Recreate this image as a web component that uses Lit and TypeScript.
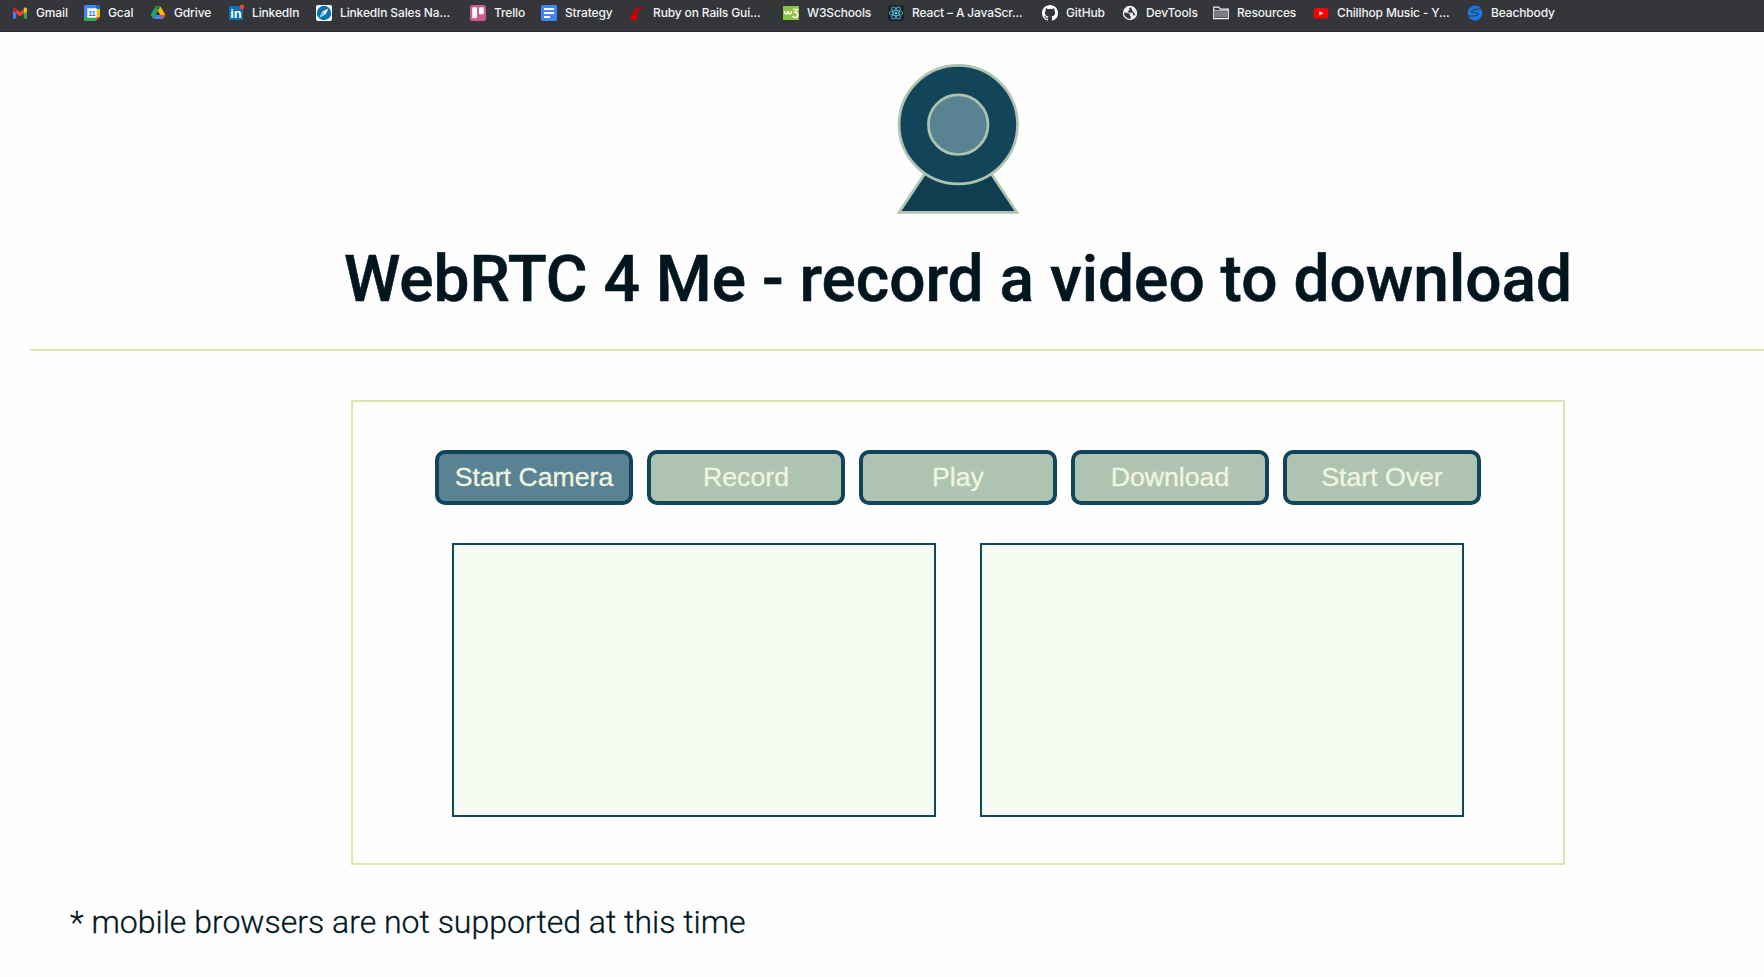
import { LitElement, html, css, svg } from "lit";
import { customElement, property } from "lit/decorators.js";

const icons = {
  gmail: svg`<path d="M1 3.6v10h3.2V7.200z" fill="#4285f4"/><path d="M15 3.600v10h-3.200V7.200z" fill="#34a853"/><path d="M4.200 4.200v4.200L8 11.200l3.800-2.800V4.200L8 7z" fill="#ea4335"/><path d="M1 4.400C1 2.600 2.900 2 4.200 3v5.400L1 6z" fill="#c5221f"/><path d="M15 4.400C15 2.600 13.100 2 11.800 3v5.400L15 6z" fill="#fbbc04"/>`,
  gcal: svg`<path d="M0 1.500Q0 0 1.500 0H12v4H4v8H0z" fill="#4285f4"/><path d="M12 0h2.500Q16 0 16 1.500V4h-4z" fill="#1967d2"/><path d="M12 4h4v8h-4z" fill="#fbbc04"/><path d="M0 12h12v4H1.500Q0 16 0 14.500z" fill="#34a853"/><path d="M12 12h4l-4 4z" fill="#ea4335"/><path d="M3.300 3.300h9.400v9.400H3.300z" fill="#fff"/><text x="7.800" y="10.800" font-size="7.500" font-weight="700" letter-spacing="-.3" text-anchor="middle" fill="#1a73e8" font-family="Liberation Sans">11</text>`,
  drive: svg`<path d="M5.500 1.500L8 5.700 3.300 14 .700 9.800z" fill="#1ea362"/><path d="M5.500 1.500h5l4.900 8.500h-5z" fill="#ffba00"/><path d="M5.500 1.500h5L8 5.700z" fill="#188038"/><path d="M5.600 10h9.800l-2.400 4H3.300z" fill="#4285f4"/><path d="M10.400 10h5L13 14z" fill="#ea4335"/>`,
  linkedin: svg`<path d="M1 1h14v14H1z" fill="#0a72b1"/><text x="8" y="13" font-size="13" font-weight="700" text-anchor="middle" fill="#fff" font-family="Liberation Sans">in</text><circle cx="14" cy="1.800" r="2.400" fill="#ea4335"/>`,
  sales: svg`<rect width="16" height="16" rx="2" fill="#fff"/><circle cx="8" cy="8" r="7.200" fill="#0a72b1"/><path d="M12.500 3.500L9.500 9.500 3.500 12.500 6.500 6.500z" fill="#fff"/><path d="M6.500 6.500l3 3-6 3z" fill="#8bc3e6"/>`,
  trello: svg`<rect width="16" height="16" rx="2.500" fill="#cd5a91"/><rect x="2.200" y="2.200" width="4.800" height="11" rx="1" fill="#fff"/><rect x="9" y="2.200" width="4.800" height="7" rx="1" fill="#fff"/>`,
  doc: svg`<rect width="16" height="16" rx="2" fill="#4285f4"/><path d="M3 4h10M3 8h10M3 12h6" stroke="#fff" stroke-width="1.800"/>`,
  rails: svg`<path d="M1 15C.800 12 3 10.500 4 8.500 5.200 5.300 8 2.500 13 2.200L14 3.500 11 4C8.700 5.500 8 7.500 8 9.500 8 11.500 8.300 13.500 9 15z" fill="#d30001"/><path d="M1 10.600l1.800 1.100M2.500 7l1.700 1.300M5 3.600l1.500 1.800M9 1.300l.500 1.700M14 1.200l.800.800" stroke="#d30001" stroke-width="1"/>`,
  w3: svg`<rect y="1" width="16" height="14" rx=".500" fill="#8bc53f"/><path d="M1.500 5.800c0 4 3.300 4 3.500.300.200 3.700 3.600 3.500 3.600-.300M10.300 4.400h4.200l-2.600 2.900c3.800 0 3.500 5.200 0 5.200-1.200 0-1.900-.500-2.300-1.400" fill="none" stroke="#fff" stroke-width="1.400"/>`,
  react: svg`<rect width="16" height="16" rx="2.500" fill="#20232a"/><g fill="none" stroke="#4fb4cf" stroke-width=".900"><ellipse cx="8" cy="8" rx="6.800" ry="2.600"/><ellipse cx="8" cy="8" rx="6.800" ry="2.600" transform="rotate(60 8 8)"/><ellipse cx="8" cy="8" rx="6.800" ry="2.600" transform="rotate(120 8 8)"/></g><circle cx="8" cy="8" r="1.300" fill="#61dafb"/>`,
  github: svg`<path fill="#fff" d="M8 0C3.580 0 0 3.580 0 8c0 3.540 2.290 6.530 5.470 7.590.4.070.55-.17.55-.38 0-.19-.01-.82-.01-1.490-2.010.37-2.530-.49-2.690-.94-.09-.23-.48-.94-.82-1.130-.28-.15-.68-.52-.01-.53.63-.01 1.080.58 1.230.82.72 1.210 1.870.87 2.330.66.07-.52.28-.87.51-1.070-1.780-.2-3.640-.89-3.640-3.950 0-.87.31-1.590.82-2.150-.08-.2-.36-1.020.08-2.120 0 0 .67-.21 2.200.82a7.600 7.600 0 0 1 4 0c1.530-1.040 2.200-.82 2.200-.82.44 1.100.16 1.920.08 2.120.51.56.82 1.270.82 2.150 0 3.070-1.870 3.750-3.650 3.950.29.25.54.73.54 1.480 0 1.070-.01 1.930-.01 2.200 0 .21.15.46.55.38A8 8 0 0 0 16 8c0-4.420-3.580-8-8-8z"/>`,
  globe: svg`<circle cx="8" cy="8" r="7.200" fill="#f1f3f4"/><path d="M2.300 7.800l3.700.400 2 1-.500 1.800 1.300.700-.500 2.100C5 13.600 2.300 11.500 2.300 7.800zM8.800 2.400L7 3.600l1 1.500-2 1.200.5 1 4.200.4.8 2.600 1.900-.3" fill="#35363a" stroke="#35363a" stroke-width=".4"/><path d="M9.200 3.400l2.500.6-1.700 1.800 1.800 1.200 2.200.4-1-2.500z" fill="#f1f3f4"/>`,
  folder: svg`<path d="M.750 13.700V2.200h5l1.500 2h8v9.500z" fill="#35363a" stroke="#f1f3f4" stroke-width="1.200"/><path d="M2 6.500h12v6H2z" fill="#7c7d80"/><path d="M1 5.700h14" stroke="#f1f3f4" stroke-width=".800"/>`,
  youtube: svg`<rect x=".800" y="3" width="14.400" height="10.500" rx="2.500" fill="#f00"/><path d="M6.300 6l4 2.200-4 2.200z" fill="#fff"/>`,
  beach: svg`<circle cx="8" cy="8" r="7.400" fill="#1579e6"/><path d="M14.500 3.800C9 4 5.500 4.800 3.800 6.600c2.200 1.200 6 .600 8.200 2-1.500 2-6.500 3.200-11.500 2.200" fill="none" stroke="#35363a" stroke-width="1"/>`,
};

const bookmarks: [keyof typeof icons, string][] = [
  ["gmail", "Gmail"],
  ["gcal", "Gcal"],
  ["drive", "Gdrive"],
  ["linkedin", "LinkedIn"],
  ["sales", "LinkedIn Sales Na..."],
  ["trello", "Trello"],
  ["doc", "Strategy"],
  ["rails", "Ruby on Rails Gui..."],
  ["w3", "W3Schools"],
  ["react", "React – A JavaScr..."],
  ["github", "GitHub"],
  ["globe", "DevTools"],
  ["folder", "Resources"],
  ["youtube", "Chillhop Music - Y..."],
  ["beach", "Beachbody"],
];

@customElement("bookmarks-bar")
class BookmarksBar extends LitElement {
  static styles = css`
    :host {
      display: grid;
      box-sizing: border-box;
      height: 32px;
      padding: 5px 0 0 12px;
      grid-template-columns: 72px 66px 78px 88px 154px 71px 88px 154px 105px 154px 80px 91px 100px 154px 100px;
      align-items: start;
      background: #35363a;
      border-bottom: 1px solid #28292c;
      font: 500 12px/16px Inter, sans-serif;
      letter-spacing: -0.14px;
      color: #f1f3f4;
    }
    .item {
      display: flex;
      gap: 8px;
      white-space: nowrap;
    }
    .icon {
      width: 16px;
      height: 16px;
      flex: none;
      overflow: visible;
    }
  `;
  render() {
    return bookmarks.map(
      ([icon, label]) => html`<div class="item">
        <svg class="icon" viewBox="0 0 16 16">${icons[icon]}</svg><span>${label}</span>
      </div>`
    );
  }
}

@customElement("control-button")
class ControlButton extends LitElement {
  @property() label = "";
  @property({ type: Boolean }) disabled = false;
  static styles = css`
    .btn {
      display: block;
      width: 198px;
      height: 55px;
      padding: 0;
      border: 4px solid #124559;
      border-radius: 10px;
      background: #598392;
      color: #eff6e0;
      font: 26.67px "Liberation Sans", Arial, sans-serif;
      -webkit-text-stroke: 0.3px #eff6e0;
      white-space: nowrap;
    }
    .btn:disabled {
      background: #aec3b0;
    }
  `;
  render() {
    return html`<button class="btn" ?disabled=${this.disabled}>${this.label}</button>`;
  }
}

@customElement("app-root")
class AppRoot extends LitElement {
  static styles = css`
    :host {
      display: block;
      height: 977px;
      overflow: hidden;
      background: #fefefe;
      color: #01161e;
      font-family: Roboto, sans-serif;
    }
    .page {
      display: flex;
      flex-direction: column;
      align-items: center;
      width: 1856px;
      padding: 30px 30px 0;
    }
    .logo {
      display: block;
      width: 126px;
      height: 154px;
    }
    h1 {
      margin: 26px 0 0;
      font-size: 64px;
      line-height: 76px;
      font-weight: 500;
      -webkit-text-stroke: 0.6px #01161e;
      white-space: nowrap;
    }
    .rule {
      align-self: stretch;
      height: 2px;
      margin-top: 31px;
      background: #d8e8ac;
    }
    .panel {
      box-sizing: border-box;
      width: 1214px;
      height: 465px;
      margin-top: 49px;
      padding-top: 48px;
      border: 2px solid #d8e8ac;
      display: flex;
      flex-direction: column;
      align-items: center;
      gap: 38px;
    }
    .controls {
      display: flex;
      gap: 14px;
    }
    .screens {
      display: flex;
      gap: 44px;
    }
    .screen {
      box-sizing: border-box;
      width: 484px;
      height: 274px;
      border: 2px solid #124559;
      background: #f6fcf1;
    }
    .note {
      align-self: flex-start;
      margin: 37px 0 0 40px;
      font-size: 32px;
      line-height: 40px;
      font-weight: 300;
      -webkit-text-stroke: 0.3px #01161e;
      white-space: nowrap;
    }
  `;
  render() {
    return html`
      <bookmarks-bar></bookmarks-bar>
      <main class="page">
        <svg class="logo" viewBox="0 0 126 154" stroke="#aec3b0" stroke-width="2.7">
          <path d="M4.200 150.300L63 61.500l58.800 88.800z" fill="#103d50" />
          <circle cx="63.300" cy="62.600" r="59.200" fill="#124559" />
          <circle cx="63.200" cy="62.700" r="29.800" fill="#598392" />
        </svg>
        <h1>WebRTC 4 Me - record a video to download</h1>
        <div class="rule"></div>
        <section class="panel">
          <div class="controls">
            <control-button label="Start Camera"></control-button>
            <control-button label="Record" disabled></control-button>
            <control-button label="Play" disabled></control-button>
            <control-button label="Download" disabled></control-button>
            <control-button label="Start Over" disabled></control-button>
          </div>
          <div class="screens">
            <div class="screen"></div>
            <div class="screen"></div>
          </div>
        </section>
        <p class="note">* mobile browsers are not supported at this time</p>
      </main>
    `;
  }
}
